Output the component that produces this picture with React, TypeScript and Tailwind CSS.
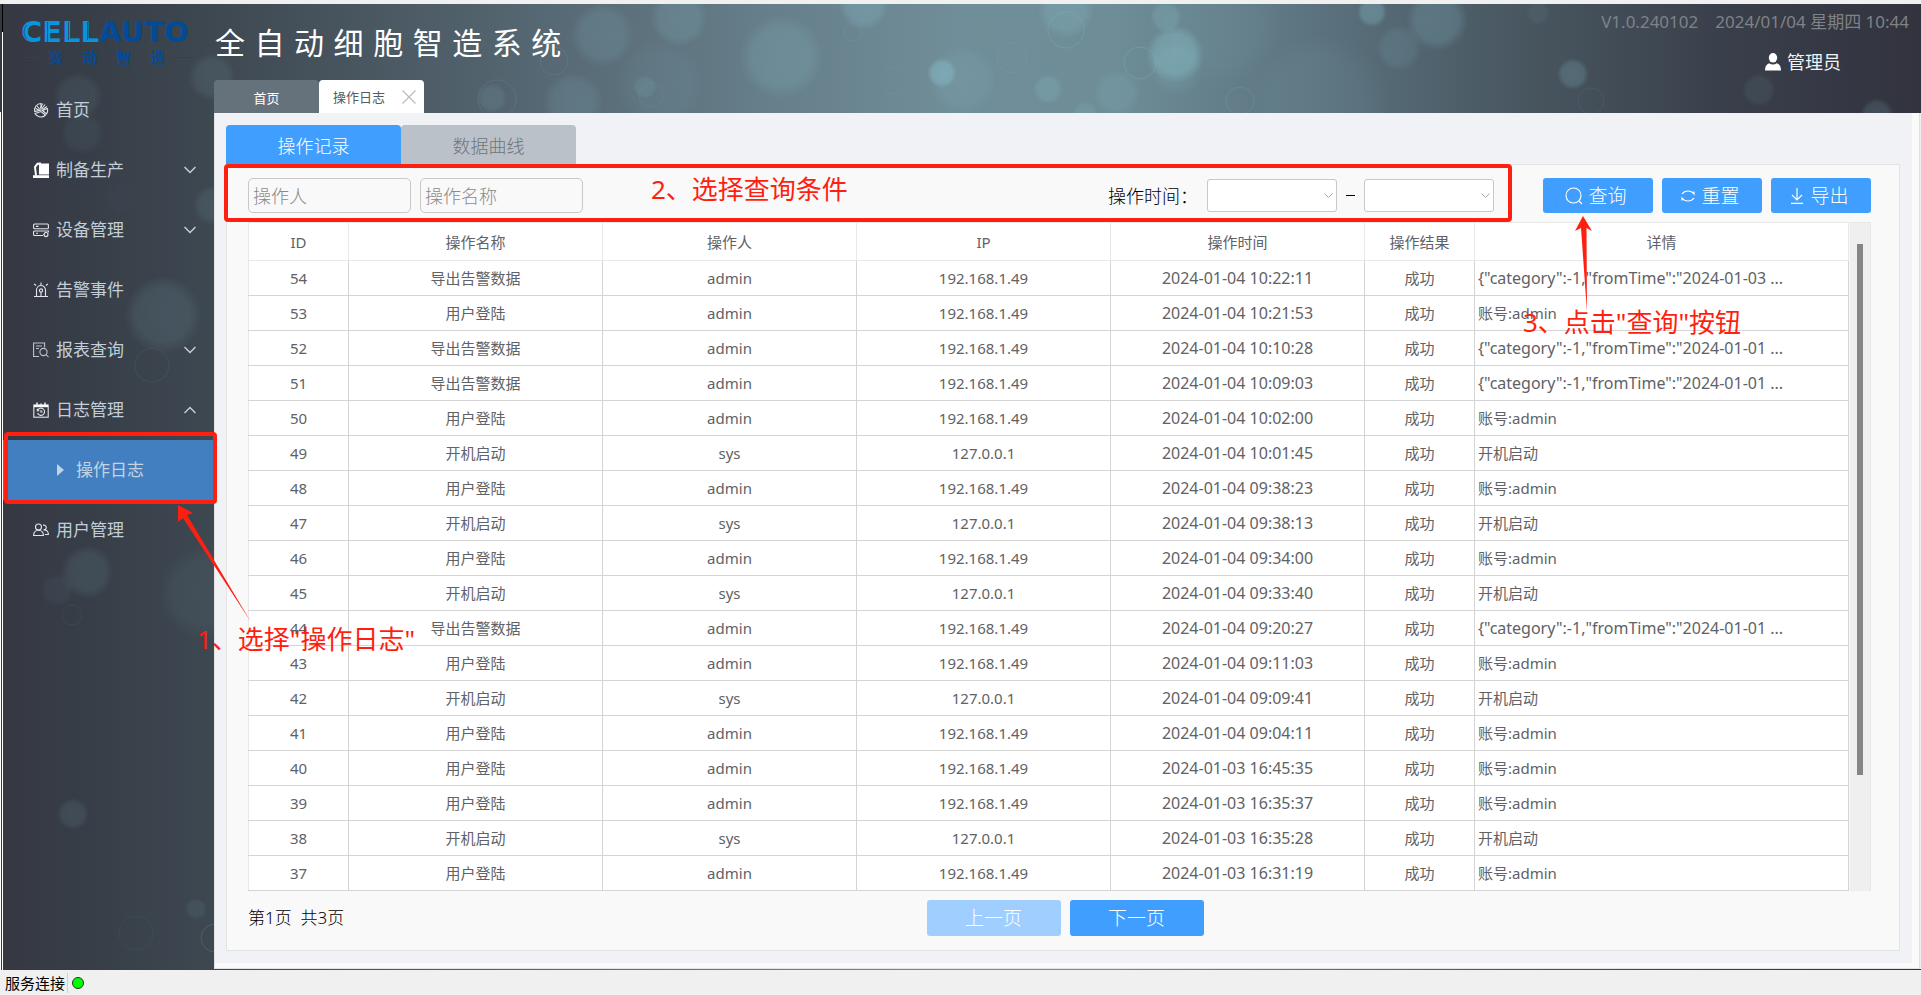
import React from "react";

type Bubble = [cx: number, cy: number, r: number, opacity: number];

const BUBBLES: Bubble[] = [
  [602, 31, 32, 0.17], [679, 14, 29, 0.2], [781, 53, 42, 0.22], [864, 1, 25, 0.32],
  [1066, 6, 28, 0.3], [1166, 13, 16, 0.3], [1175, 50, 29, 0.5], [1176, 64, 27, 0.15],
  [942, 69, 15, 0.55], [962, 76, 34, 0.16], [1048, 85, 15, 0.28], [1117, 89, 23, 0.18],
  [1085, 110, 13, 0.2], [1372, 8, 15, 0.36], [1437, 16, 31, 0.24], [1399, 44, 23, 0.15],
  [573, 98, 30, 0.16], [645, 83, 12, 0.15], [492, 94, 15, 0.14], [1573, 70, 16, 0.25],
  [1759, 86, 17, 0.1], [1877, 111, 17, 0.18], [1538, 9, 12, 0.08], [1320, 100, 70, 0.08],
  [1220, 20, 60, 0.08], [660, 80, 44, 0.08], [78, 93, 25, 0.1], [82, 129, 22, 0.07],
  [212, 73, 24, 0.12], [163, 311, 39, 0.14], [213, 201, 20, 0.12], [120, 194, 16, 0.02],
  [87, 568, 27, 0.12], [57, 586, 17, 0.06], [205, 589, 46, 0.07], [73, 810, 16, 0.12],
  [196, 905, 11, 0.1],
];

const RINGS: Bubble[] = [
  [1066, 26, 18, 0.28], [1140, 59, 16, 0.32], [1240, 97, 14, 0.2], [554, 57, 14, 0.14],
  [1012, 54, 15, 0.12], [497, 95, 19, 0.14], [894, 77, 13, 0.12], [853, 28, 9, 0.12],
  [1591, 97, 13, 0.1], [152, 361, 17, 0.1], [72, 611, 10, 0.08], [136, 929, 17, 0.07],
  [215, 934, 14, 0.2], [651, 91, 12, 0.1],
];

function Backdrop() {
  return (
    <svg
      className="absolute inset-0 h-full w-full"
      viewBox="3 0 1918 966"
      preserveAspectRatio="xMidYMin slice"
      aria-hidden="true"
    >
      <defs>
        <linearGradient id="base" x1="0" x2="1" y1="0" y2="0">
          <stop offset="0" stopColor="#363842" />
          <stop offset="0.045" stopColor="#373e48" />
          <stop offset="0.11" stopColor="#3e4851" />
          <stop offset="0.26" stopColor="#53646f" />
          <stop offset="0.4" stopColor="#667f8a" />
          <stop offset="0.5" stopColor="#708e99" />
          <stop offset="0.58" stopColor="#6e8d97" />
          <stop offset="0.68" stopColor="#5c7480" />
          <stop offset="0.78" stopColor="#4a5963" />
          <stop offset="0.9" stopColor="#393f4a" />
          <stop offset="1" stopColor="#32333f" />
        </linearGradient>
        <radialGradient id="bubble">
          <stop offset="0" stopColor="#84b8c4" />
          <stop offset="0.68" stopColor="#84b8c4" stopOpacity="0.9" />
          <stop offset="1" stopColor="#84b8c4" stopOpacity="0" />
        </radialGradient>
      </defs>
      <rect x="3" width="1918" height="966" fill="url(#base)" />
      {BUBBLES.map(([cx, cy, r, o]) => (
        <circle key={`${cx}-${cy}`} cx={cx} cy={cy} r={r} fill="url(#bubble)" opacity={o} />
      ))}
      {RINGS.map(([cx, cy, r, o]) => (
        <circle key={`${cx}-${cy}`} cx={cx} cy={cy} r={r} fill="none" stroke="#84b8c4" opacity={o} />
      ))}
    </svg>
  );
}

function Logo() {
  return (
    <svg className="h-[64px] w-[184px]" viewBox="-4 -10 184 64" role="img" aria-label="CELLAUTO 赛动智造">
      <text
        x="0"
        y="25"
        fontFamily="'DejaVu Sans', sans-serif"
        fontWeight="700"
        fontSize="29"
        fill="#0a94e0"
      >
        CELL<tspan fill="#034b98">AUTO</tspan>
      </text>
      <g stroke="#37404a" strokeWidth="1" opacity="0.75">
        <path d="M26.500 5v20M47.500 5v18M66.500 5v18M29 9h13M29 21h13M49 21h12M68 21h12" />
        <path d="M6 8c-4 4-4 10 0 14M137 9v16M120 5v12" fill="none" />
      </g>
      <g
        fontFamily="'Noto Sans CJK SC', sans-serif"
        fontWeight="700"
        fontSize="15"
        fill="#034b98"
      >
        <text x="27 61 95 129" y="46">赛动智造</text>
      </g>
      <path d="M1 40.500h18M152 40.500h18" stroke="#034b98" />
    </svg>
  );
}

const iconProps = {
  className: "h-4 w-4 shrink-0",
  viewBox: "0 0 16 16",
  fill: "none",
  stroke: "#e2e6ea",
  strokeWidth: 1.1,
  "aria-hidden": true,
} as const;

const HomeIcon = () => (
  <svg {...iconProps}>
    <path d="M8 1.500A6.500 6.500 0 0 0 1.800 9.500L8 8Z" />
    <path d="M2 11.500 8 9.500l4.500 3.500A6.500 6.500 0 0 1 2 11.500ZM9.500 8.500l4 3.500a6 6 0 0 0 .8-5.500Z" />
    <path d="M9.500 1.500 7.500 6M12 2.500 8.500 7M14 4.500 9.500 7.500M4 4l3 3.500M2.500 6.500 6 8" />
  </svg>
);
const RobotIcon = () => (
  <svg {...iconProps}>
    <path d="M6.500 2h9v10H6.500Z" fill="#fff" stroke="#fff" />
    <path d="M0 13.200h16V16H0Z" fill="#fff" stroke="none" />
    <path d="M3 13.500 2 5 4.500 1.800 8 1.500" stroke="#fff" strokeWidth="2" />
    <path d="m6 4-2 2.500 1.500 5.500" stroke="#3a414b" />
  </svg>
);
const DeviceIcon = () => (
  <svg {...iconProps}>
    <rect x="0.600" y="2" width="14.800" height="4.800" rx="1" />
    <path d="M10 13.500H1.500a1 1 0 0 1-1-1V10a1 1 0 0 1 1-1h13.900v1.500M3 4.400h2.500M3 11.200h2" />
    <circle cx="13" cy="12.500" r="2" />
    <path d="M13 10v1M13 14v1.200M10.500 12.500h1" />
  </svg>
);
const AlarmIcon = () => (
  <svg {...iconProps}>
    <path d="M3.500 14V8a4.500 4.500 0 0 1 9 0v6M1 14.500h14M8 3.500V.5M3 3.500 1.200 2M13 3.500 14.800 2" />
    <circle cx="8" cy="8.500" r="1.600" />
    <path d="M8 10v4" />
  </svg>
);
const ReportIcon = () => (
  <svg {...iconProps} stroke="#bcc4cc">
    <path d="M6 14.500H.6V1h11v4.500M3 4h6M3 6.500h3" />
    <circle cx="10.500" cy="10" r="3.600" />
    <path d="m13 12.500 2.500 2.700" />
  </svg>
);
const LogIcon = () => (
  <svg {...iconProps}>
    <rect x="0.800" y="3" width="14.400" height="12.200" />
    <path d="M1 4h14" strokeWidth="2.400" stroke="#fff" />
    <path d="M4 .5v3M8 1.500v2M12 .5v3" strokeWidth="1.600" />
    <path d="M4.600 8.500a3.600 3.600 0 1 1 0 2.500M4.300 6.800v2h2M8 8v2h1.700" />
  </svg>
);
const UsersIcon = () => (
  <svg {...iconProps}>
    <circle cx="5.500" cy="5" r="3" />
    <path d="M.6 13.500c0-3 2-5.300 4.900-5.300s4.900 2.300 4.900 5.300Z" />
    <path d="M10 3.300a2.400 2.400 0 1 1 .5 4.600c2.800-.3 4.900 1.600 4.900 4.600h-3.600" />
  </svg>
);

function Chevron({ up = false }: { up?: boolean }) {
  return (
    <svg className="ml-auto h-3 w-3 shrink-0" viewBox="0 0 12 12" fill="none" stroke="#c3ced9" strokeWidth="1.500" aria-hidden="true">
      <path d={up ? "M0.500 9 6 3.500 11.500 9" : "M0.500 3 6 8.500 11.500 3"} />
    </svg>
  );
}

interface NavEntry {
  label: string;
  Icon: () => React.JSX.Element;
  expand?: "open" | "closed";
}

const NAV: NavEntry[] = [
  { label: "首页", Icon: HomeIcon },
  { label: "制备生产", Icon: RobotIcon, expand: "closed" },
  { label: "设备管理", Icon: DeviceIcon, expand: "closed" },
  { label: "告警事件", Icon: AlarmIcon },
  { label: "报表查询", Icon: ReportIcon, expand: "closed" },
  { label: "日志管理", Icon: LogIcon, expand: "open" },
  { label: "用户管理", Icon: UsersIcon },
];

const NOTE =
  "pointer-events-none absolute z-20 whitespace-nowrap text-[26px] leading-8 text-[#ff1f10]";

function Sidebar() {
  return (
    <aside className="relative z-10 w-[211px] shrink-0">
      <div className="h-[76px] pl-[14px] pt-[3px]">
        <Logo />
      </div>
      <nav>
        <ul>
          {NAV.map(({ label, Icon, expand }) => (
            <li key={label}>
              <a
                href="#"
                className="flex h-[60px] items-center gap-[7px] pl-[30px] pr-[18px] text-[17px] leading-6 text-[#c3ced9]"
              >
                <Icon />
                {label}
                {expand && <Chevron up={expand === "open"} />}
              </a>
              {expand === "open" && (
                <div className="relative">
                  <a
                    href="#"
                    aria-current="page"
                    className="flex h-[60px] items-center gap-3 bg-[#427fc0] pl-[54px] text-[17px] leading-6 text-[#c3d3e4]"
                  >
                    <svg className="h-3 w-[7px]" viewBox="0 0 7 12" fill="#c3d3e4" aria-hidden="true">
                      <path d="M0 0 7 6 0 12Z" />
                    </svg>
                    操作日志
                  </a>
                  <div className="pointer-events-none absolute -bottom-1 -right-[3px] -top-2 left-px rounded border-4 border-[#ff1f10]" />
                  <svg className="pointer-events-none absolute left-[167px] top-[60px] h-[130px] w-[90px]" viewBox="0 0 90 130" fill="#ff1f10" aria-hidden="true">
                    <path d="M8 5 23 13 17 15 81 122 13 18 8 22Z" />
                  </svg>
                  <p className={`${NOTE} left-[194px] top-[183px]`}>1、选择"操作日志"</p>
                </div>
              )}
            </li>
          ))}
        </ul>
      </nav>
    </aside>
  );
}

function Header() {
  return (
    <header className="flex h-[109px] justify-between">
      <div className="flex flex-col justify-between">
        <h1 className="whitespace-nowrap pl-px pt-5 text-[30px] leading-10 text-white [font-family:'DejaVu_Sans','Noto_Sans_CJK_SC',sans-serif]">
          全 自 动 细 胞 智 造 系 统
        </h1>
        <div className="flex h-[33px] text-[13px] leading-5">
          <a href="#" className="flex w-[105px] items-center justify-center rounded-t-sm bg-[#65727b] pt-0.5 text-white">
            首页
          </a>
          <div className="flex w-[105px] items-center justify-between rounded-t-sm bg-white pl-[14px] pr-2 text-[#555b63]">
            <span>操作日志</span>
            <button type="button" aria-label="关闭">
              <svg className="h-[14px] w-[14px]" viewBox="0 0 14 14" stroke="#b9bcc0" strokeWidth="1.200" aria-hidden="true">
                <path d="m0.500 0.500 13 13M13.500 0.500l-13 13" />
              </svg>
            </button>
          </div>
        </div>
      </div>
      <div className="flex flex-col pr-3 pt-1.5">
        <div className="flex gap-[17px] text-[17px] leading-6 text-[#7f8386]">
          <span>V1.0.240102</span>
          <span>2024/01/04 星期四 10:44</span>
        </div>
        <button type="button" className="mr-[68px] mt-4 flex items-center gap-1.5 self-end text-lg leading-6 text-[#f0f3f6]">
          <svg className="h-[18px] w-4" viewBox="0 0 16 18" fill="#fff" aria-hidden="true">
            <ellipse cx="8" cy="4.800" rx="4.200" ry="4.800" />
            <path d="M0 17.500c0-4 1.500-6.500 4.200-7.300 2.200 1.700 5.400 1.700 7.600 0C14.500 11 16 13.500 16 17.500Z" />
          </svg>
          管理员
        </button>
      </div>
    </header>
  );
}

function TimeSelect({ label }: { label: string }) {
  return (
    <div className="relative">
      <select aria-label={label} className="block h-[33px] w-[130px] appearance-none rounded-[3px] border border-[#c8c8c8] bg-white px-2" />
      <svg className="pointer-events-none absolute right-1 top-3 h-[9px] w-[9px]" viewBox="0 0 9 9" fill="none" stroke="#a6a6a6" aria-hidden="true">
        <path d="M0.500 2.500 4.500 6.500 8.500 2.500" />
      </svg>
    </div>
  );
}

const ACTION =
  "flex h-[35px] items-center justify-center gap-[5px] rounded-[3px] bg-[#409eff] pr-1 text-[19px] font-light leading-6 text-white";
const FIELD =
  "h-[35px] w-[163px] rounded-[5px] border border-[#c8c8c8] bg-[#f9f9f9] px-1 text-lg font-light leading-6 placeholder:text-[#8a8a8a]";

function Filters() {
  return (
    <form className="flex items-center" onSubmit={(e) => e.preventDefault()}>
      <div className="relative flex flex-1 items-center">
        <input aria-label="操作人" placeholder="操作人" className={FIELD} />
        <input aria-label="操作名称" placeholder="操作名称" className={`${FIELD} ml-[9px]`} />
        <p className={`${NOTE} -top-[5px] left-[403px]`}>2、选择查询条件</p>
        <span className="ml-auto mr-[9px] text-lg font-light leading-6 text-black">操作时间：</span>
        <TimeSelect label="开始时间" />
        <span className="mx-[9px] h-px w-[9px] bg-black" />
        <TimeSelect label="结束时间" />
        <div className="pointer-events-none absolute -bottom-[9px] -left-6 -right-[18px] -top-[14px] rounded border-4 border-[#ff1f10]" />
      </div>
      <div className="ml-[49px] flex gap-[9px]">
        <div className="relative">
          <button type="submit" className={`${ACTION} w-[110px]`}>
            <svg className="h-[18px] w-[18px]" viewBox="0 0 18 18" fill="none" stroke="#fff" strokeWidth="1.100" aria-hidden="true">
              <circle cx="8.500" cy="8.500" r="7.500" />
              <path d="m14 14 3 3" />
            </svg>
            查询
          </button>
          <svg className="pointer-events-none absolute left-[27px] top-[35px] z-20 h-[107px] w-[30px]" viewBox="0 0 30 107" fill="#ff1f10" aria-hidden="true">
            <path d="M13 3 22 18 16.500 15 17 99 11 15 5 18Z" />
          </svg>
          <p className={`${NOTE} -left-5 top-[128px]`}>3、点击"查询"按钮</p>
        </div>
        <button type="reset" className={`${ACTION} w-[100px]`}>
          <svg className="h-4 w-4" viewBox="0 0 16 16" fill="none" stroke="#fff" strokeWidth="1.200" aria-hidden="true">
            <path d="M2 6C5 2 11 2 14 6V3.500M14 10c-3 4-9 4-12 0v2.500" />
          </svg>
          重置
        </button>
        <button type="button" className={`${ACTION} w-[100px]`}>
          <svg className="h-4 w-4" viewBox="0 0 16 16" fill="none" stroke="#fff" strokeWidth="1.200" aria-hidden="true">
            <path d="M8 0v12M3 7l5 5 5-5M2 15.400h12" />
          </svg>
          导出
        </button>
      </div>
    </form>
  );
}

type Kind = "login" | "boot" | "export3" | "export1";

const KINDS: Record<Kind, [name: string, user: string, ip: string, detail: string]> = {
  login: ["用户登陆", "admin", "192.168.1.49", "账号:admin"],
  boot: ["开机启动", "sys", "127.0.0.1", "开机启动"],
  export3: ["导出告警数据", "admin", "192.168.1.49", '{"category":-1,"fromTime":"2024-01-03 ...'],
  export1: ["导出告警数据", "admin", "192.168.1.49", '{"category":-1,"fromTime":"2024-01-01 ...'],
};

const LOGS: [id: number, kind: Kind, time: string][] = [
  [54, "export3", "2024-01-04 10:22:11"],
  [53, "login", "2024-01-04 10:21:53"],
  [52, "export1", "2024-01-04 10:10:28"],
  [51, "export1", "2024-01-04 10:09:03"],
  [50, "login", "2024-01-04 10:02:00"],
  [49, "boot", "2024-01-04 10:01:45"],
  [48, "login", "2024-01-04 09:38:23"],
  [47, "boot", "2024-01-04 09:38:13"],
  [46, "login", "2024-01-04 09:34:00"],
  [45, "boot", "2024-01-04 09:33:40"],
  [44, "export1", "2024-01-04 09:20:27"],
  [43, "login", "2024-01-04 09:11:03"],
  [42, "boot", "2024-01-04 09:09:41"],
  [41, "login", "2024-01-04 09:04:11"],
  [40, "login", "2024-01-03 16:45:35"],
  [39, "login", "2024-01-03 16:35:37"],
  [38, "boot", "2024-01-03 16:35:28"],
  [37, "login", "2024-01-03 16:31:19"],
];

const HEADINGS = ["ID", "操作名称", "操作人", "IP", "操作时间", "操作结果", "详情"];

function LogTable() {
  const cell = "border border-[#d4d4d4] first:border-l-[#e8e8e8]";
  return (
    <div className="mt-[9px] flex">
      <table className="flex-1 table-fixed border-collapse bg-white text-center text-[15px] leading-5 text-[#606266]">
        <colgroup>
          <col className="w-[100px]" />
          <col className="w-[254px]" />
          <col className="w-[254px]" />
          <col className="w-[254px]" />
          <col className="w-[254px]" />
          <col className="w-[110px]" />
          <col />
        </colgroup>
        <thead>
          <tr className="h-[38px]">
            {HEADINGS.map((h) => (
              <th key={h} scope="col" className="border border-[#e8e8e8] font-normal">
                {h}
              </th>
            ))}
          </tr>
        </thead>
        <tbody>
          {LOGS.map(([id, kind, time]) => {
            const [name, user, ip, detail] = KINDS[kind];
            const isJson = detail.startsWith("{");
            return (
              <tr key={id} className="h-[35px]">
                <td className={cell}>{id}</td>
                <td className={cell}>{name}</td>
                <td className={cell}>{user}</td>
                <td className={cell}>{ip}</td>
                <td className={`${cell} text-base leading-5`}>{time}</td>
                <td className={cell}>成功</td>
                <td className={`${cell} truncate pl-[3px] text-left ${isJson ? "text-base leading-5" : ""}`}>
                  {detail}
                </td>
              </tr>
            );
          })}
        </tbody>
      </table>
      <div className="ml-px flex w-[21px] justify-center border-r border-t border-[#e8e8e8] bg-[#efefef] pt-[21px]">
        <div className="h-[531px] w-1.5 bg-[#858585]" />
      </div>
    </div>
  );
}

function Pager() {
  const button = "h-9 w-[134px] rounded-[3px] text-[19px] font-light leading-6 text-white";
  return (
    <div className="mt-[9px] grid grid-cols-[1fr_auto_1fr] items-center">
      <p className="whitespace-pre text-[17px] font-light leading-6 text-black">第1页  共3页</p>
      <div className="flex gap-[9px]">
        <button type="button" disabled className={`${button} bg-[#a0cfff]`}>上一页</button>
        <button type="button" className={`${button} bg-[#409eff]`}>下一页</button>
      </div>
    </div>
  );
}

export default function App() {
  return (
    <div className="flex min-h-screen flex-col bg-[#f0f0f0] pt-1 [font-family:'Noto_Sans','Noto_Sans_CJK_SC',sans-serif]">
      <div className="flex flex-1">
        <div className="flex w-[3px] shrink-0 flex-col bg-white">
          <div className="h-7 border-r border-black bg-[#363842]" />
          <div className="mr-px h-20 bg-[#363842]" />
          <div className="mx-px flex-1 bg-[#363842]" />
        </div>
        <div className="relative flex min-w-0 flex-1">
          <Backdrop />
          <Sidebar />
          <div className="relative flex min-w-0 flex-1 flex-col pb-px">
            <Header />
            <div className="flex flex-1 bg-[#f0f0f0] pr-px">
              <main className="flex flex-1 flex-col border-x border-b border-[#e2e2e4] bg-[#fafafa] pb-[5px] pr-[7px]">
                <div className="flex flex-1 flex-col bg-[#f0f2f6] pb-3 pl-[11px] pr-3 pt-3">
                  <div role="tablist" className="flex text-lg font-light leading-6">
                    <button role="tab" aria-selected="true" className="h-[39px] w-[175px] rounded-t-sm bg-[#409eff] pt-0.5 text-white">
                      操作记录
                    </button>
                    <button role="tab" aria-selected="false" className="h-[39px] w-[175px] rounded-t-sm bg-[#bac1c8] pt-0.5 text-[#6f757b]">
                      数据曲线
                    </button>
                  </div>
                  <section className="flex-1 border border-[#e3e3e3] bg-[#f9f9f9] pb-3 pl-[21px] pt-[13px]">
                    <div className="pr-7">
                      <Filters />
                      <LogTable />
                    </div>
                    <div className="pr-[17px]">
                      <Pager />
                    </div>
                  </section>
                </div>
              </main>
            </div>
          </div>
        </div>
      </div>
      <footer className="flex h-[25px] items-center text-[15px] leading-5 text-black">
        <span className="ml-[5px] border-r border-[#d0d0d0] pr-0.5">服务连接</span>
        <span className="ml-1 h-3 w-3 rounded-full border border-[#1a3a1a] bg-[#00ff00]" />
      </footer>
    </div>
  );
}
